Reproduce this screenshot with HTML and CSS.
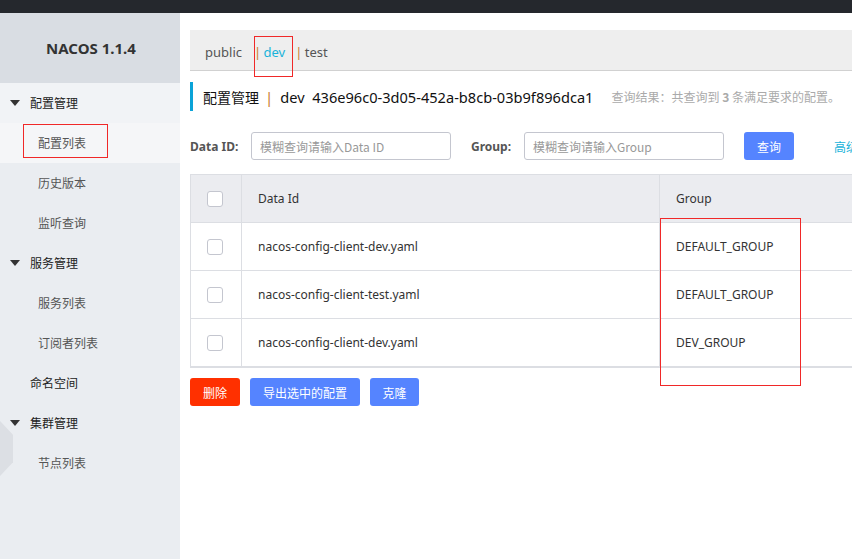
FILE: index.html
```html
<!DOCTYPE html>
<html lang="zh">
<head>
<meta charset="utf-8">
<link rel="stylesheet" href="styles.css">
</head>
<body>
<div class="topbar"></div>
<div class="layout">
  <aside class="sidebar">
    <div class="brand">NACOS 1.1.4</div>
    <div class="menu-item parent open"><span class="tri"></span>配置管理</div>
    <div class="menu-item child active"><span class="mark">配置列表</span></div>
    <div class="menu-item child">历史版本</div>
    <div class="menu-item child">监听查询</div>
    <div class="menu-item parent"><span class="tri"></span>服务管理</div>
    <div class="menu-item child">服务列表</div>
    <div class="menu-item child">订阅者列表</div>
    <div class="menu-item parent plain">命名空间</div>
    <div class="menu-item parent"><span class="tri"></span>集群管理</div>
    <div class="menu-item child">节点列表</div>
    <div class="hex"></div>
  </aside>
  <main class="main">
    <div class="tabs">
      <span class="tab first">public</span>
      <span class="tab sep current"><span class="bar">|</span> dev<span class="mark-dev"></span></span>
      <span class="tab sep"><span class="bar">|</span> test</span>
    </div>
    <div class="title">
      <span class="title-main">配置管理</span>
      <span class="bar">|</span>
      <span class="title-ns">dev&nbsp; 436e96c0-3d05-452a-b8cb-03b9f896dca1</span>
      <span class="result">查询结果：共查询到 <b>3</b> 条满足要求的配置。</span>
    </div>
    <div class="search">
      <label class="lbl">Data ID:</label>
      <div class="input">模糊查询请输入Data ID</div>
      <label class="lbl lbl-group">Group:</label>
      <div class="input">模糊查询请输入Group</div>
      <button class="btn btn-blue btn-query">查询</button>
      <span class="adv">高级查询</span>
    </div>
    <div class="table">
      <div class="row head">
        <div class="cell c-check"><span class="cb"></span></div>
        <div class="cell c-id">Data Id</div>
        <div class="cell c-group">Group</div>
      </div>
      <div class="row">
        <div class="cell c-check"><span class="cb"></span></div>
        <div class="cell c-id">nacos-config-client-dev.yaml</div>
        <div class="cell c-group">DEFAULT_GROUP</div>
      </div>
      <div class="row">
        <div class="cell c-check"><span class="cb"></span></div>
        <div class="cell c-id">nacos-config-client-test.yaml</div>
        <div class="cell c-group">DEFAULT_GROUP</div>
      </div>
      <div class="row">
        <div class="cell c-check"><span class="cb"></span></div>
        <div class="cell c-id">nacos-config-client-dev.yaml</div>
        <div class="cell c-group">DEV_GROUP</div>
      </div>
      <div class="mark-group"></div>
    </div>
    <div class="actions">
      <button class="btn btn-red">删除</button>
      <button class="btn btn-blue btn-export">导出选中的配置</button>
      <button class="btn btn-blue btn-clone">克隆</button>
    </div>
  </main>
</div>
</body>
</html>
```

FILE: styles.css
```css
* { box-sizing: border-box; }
html, body { margin: 0; padding: 0; }
body {
  width: 852px;
  height: 559px;
  overflow: hidden;
  font-family: "Noto Sans", "Noto Sans CJK SC", sans-serif;
  color: #333;
  background: #fff;
}
.topbar { height: 13px; background: #25282d; }
.layout { display: flex; height: 546px; }
.sidebar {
  width: 180px;
  flex: none;
  background: #eaedf1;
  position: relative;
}
.brand {
  height: 70px;
  background: #d9dde3;
  display: flex;
  align-items: center;
  justify-content: center;
  font-weight: bold;
  font-size: 15px;
  color: #333;
  padding-left: 2px;
}
.menu-item {
  height: 40px;
  display: flex;
  align-items: center;
  font-size: 12px;
  color: #222;
  font-family: "Noto Sans CJK SC", sans-serif;
  position: relative;
  padding-bottom: 1px;
}
.menu-item.parent { padding-left: 30px; }
.menu-item.child { padding-left: 38px; color: #555; }
.menu-item.open { background: #f1f3f6; }
.menu-item.active { background: #f5f6f8; }
.tri {
  position: absolute;
  left: 10px;
  top: 17px;
  width: 0; height: 0;
  border-left: 5px solid transparent;
  border-right: 5px solid transparent;
  border-top: 6px solid #333;
}
.mark { position: relative; }
.mark::after {
  content: "";
  position: absolute;
  left: -15px; top: -10px;
  width: 83px; height: 32px;
  border: 1px solid #f02828;
}
.hex {
  position: absolute;
  left: -14px;
  top: 408px;
  width: 27px;
  height: 55px;
  background: #dcdfe4;
  clip-path: polygon(0 0, 52% 0, 100% 25%, 100% 75%, 52% 100%, 0 100%);
}
.main {
  flex: 1;
  min-width: 0;
  overflow: hidden;
  padding: 17px 0 0 10px;
  position: relative;
}
.tabs {
  height: 41px;
  background: #eeeeee;
  border-bottom: 1px solid #d1d1d1;
  display: flex;
  align-items: center;
  padding: 3px 0 0 15px;
  font-size: 13px;
  color: #555;
}
.tab { position: relative; }
.tab.first { margin-right: 12px; }
.tab.current { color: #19b3da; margin-right: 10px; }
.tab .bar { color: #c87a2c; margin-right: -1px; }
.mark-dev {
  position: absolute;
  left: 0; top: -7px;
  width: 39px; height: 41px;
  border: 1px solid #f02828;
}
.title {
  margin-top: 11px;
  height: 29px;
  border-left: 3px solid #0aa3d8;
  padding-left: 10px;
  display: flex;
  align-items: center;
  white-space: nowrap;
  color: #111;
}
.title-main { font-size: 14px; font-family: "Noto Sans CJK SC", sans-serif; }
.title .bar { color: #c87a2c; font-size: 15px; margin: 0 7px 0 6px; }
.title-ns { font-size: 14.6px; }
.result {
  margin-left: 18px;
  font-size: 12px;
  color: #aaa;
  font-family: "Noto Sans CJK SC", sans-serif;
}
.result b { font-weight: bold; }
.search {
  margin-top: 21px;
  height: 28px;
  display: flex;
  align-items: center;
  white-space: nowrap;
}
.lbl { font-size: 12px; font-weight: bold; color: #555; width: 61px; flex: none; }
.lbl-group { width: 53px; margin-left: 20px; }
.input {
  width: 200px;
  height: 28px;
  border: 1px solid #c4c6cf;
  border-radius: 3px;
  font-size: 12px;
  color: #999;
  padding-left: 8px;
  display: flex;
  align-items: center;
  font-family: "Noto Sans CJK SC", sans-serif;
  flex: none;
}
.btn {
  height: 28px;
  border: none;
  border-radius: 3px;
  color: #fff;
  font-size: 12px;
  font-family: "Noto Sans CJK SC", sans-serif;
  padding: 0;
  cursor: pointer;
  flex: none;
}
.btn-blue { background: #5584ff; }
.btn-red { background: #ff3000; }
.btn-query { width: 50px; margin-left: 20px; }
.adv {
  margin-left: 40px;
  font-size: 12px;
  color: #19b3da;
  font-family: "Noto Sans CJK SC", sans-serif;
}
.table {
  margin-top: 14px;
  width: 800px;
  border: 1px solid #dcdee3;
  border-bottom-width: 2px;
  position: relative;
}
.row {
  display: flex;
  height: 48px;
  border-top: 1px solid #dcdee3;
}
.row:first-child { border-top: none; height: 47px; }
.row.head { background: #ebecf0; }
.cell {
  display: flex;
  align-items: center;
  font-size: 12px;
  color: #333;
  padding-left: 16px;
}
.c-check {
  width: 51px;
  flex: none;
  border-right: 1px solid #dcdee3;
  padding-left: 16px;
}
.c-id { width: 418px; flex: none; border-right: 1px solid #dcdee3; }
.c-group { flex: 1; }
.cb {
  width: 16px; height: 16px;
  border: 1px solid #c4c6cf;
  border-radius: 3px;
  background: #fff;
}
.mark-group {
  position: absolute;
  left: 469px;
  top: 43px;
  width: 141px;
  height: 168px;
  border: 1px solid #f02828;
}
.actions {
  margin-top: 10px;
  display: flex;
  gap: 10px;
}
.actions .btn-red { width: 50px; }
.actions .btn-export { width: 110px; }
.actions .btn-clone { width: 49px; }
```
